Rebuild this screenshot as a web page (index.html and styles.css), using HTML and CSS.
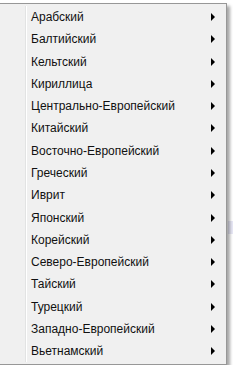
FILE: index.html
```html
<!DOCTYPE html>
<html lang="ru">
<head>
  <meta charset="UTF-8" />
  <title>Кодировка</title>
  <link rel="stylesheet" href="styles.css">
</head>
<body>
  <div class="behind"></div>
  <div class="menu">
    <div class="item"><span>Арабский</span><i class="arrow"></i></div>
    <div class="item"><span>Балтийский</span><i class="arrow"></i></div>
    <div class="item"><span>Кельтский</span><i class="arrow"></i></div>
    <div class="item"><span>Кириллица</span><i class="arrow"></i></div>
    <div class="item"><span>Центрально-Европейский</span><i class="arrow"></i></div>
    <div class="item"><span>Китайский</span><i class="arrow"></i></div>
    <div class="item"><span>Восточно-Европейский</span><i class="arrow"></i></div>
    <div class="item"><span>Греческий</span><i class="arrow"></i></div>
    <div class="item"><span>Иврит</span><i class="arrow"></i></div>
    <div class="item"><span>Японский</span><i class="arrow"></i></div>
    <div class="item"><span>Корейский</span><i class="arrow"></i></div>
    <div class="item"><span>Северо-Европейский</span><i class="arrow"></i></div>
    <div class="item"><span>Тайский</span><i class="arrow"></i></div>
    <div class="item"><span>Турецкий</span><i class="arrow"></i></div>
    <div class="item"><span>Западно-Европейский</span><i class="arrow"></i></div>
    <div class="item"><span>Вьетнамский</span><i class="arrow"></i></div>
  </div>
</body>
</html>
```

FILE: styles.css
```css
body {
  margin: 0;
  padding: 3px 0 0 0;
  background: #fff;
  font-family: "Liberation Sans", Arial, sans-serif;
  font-size: 12px;
  color: #111;
}

/* window peeking out from under the menu */
.behind {
  position: absolute;
  left: 228px;
  top: 221px;
  width: 5px;
  height: 13px;
  background: #e8e8f6;
}

.menu {
  position: relative;
  width: 226px;
  margin-left: -1px;
  padding: 2px 0;
  background: #f0f0f0;
  border: 1px solid #979797;
  box-shadow: 3px 3px 3px rgba(0, 0, 0, 0.35);
}

/* gutter line */
.menu::before {
  content: "";
  position: absolute;
  top: 2px;
  bottom: 2px;
  left: 25px;
  width: 1px;
  background: #e2e3e3;
  border-right: 1px solid #fff;
}

.item {
  display: flex;
  align-items: center;
  justify-content: space-between;
  height: 22.27px;
  padding: 0 11px 0 31px;
}

.arrow {
  width: 0;
  height: 0;
  border-left: 4px solid #000;
  border-top: 4px solid transparent;
  border-bottom: 4px solid transparent;
}
```
